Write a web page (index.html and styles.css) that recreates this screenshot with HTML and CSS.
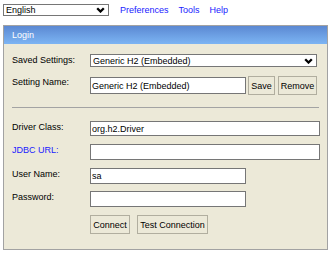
FILE: index.html
```html
<!DOCTYPE html>
<html lang="en">
<head>
    <meta charset="UTF-8">
    <title>H2 Console</title>
    <link rel="stylesheet" href="styles.css">
</head>
<body>
    <div class="toolbar">
        <span class="select-wrap lang-select">
            <select class="select">
                <option>English</option>
            </select>
            <svg class="chevron" width="9" height="6" viewBox="0 0 9 6"><path d="M1.2 1.2 L4.5 4.5 L7.8 1.2" fill="none" stroke="#000" stroke-width="2.3"/></svg>
        </span>
        <a href="#" class="nav-link">Preferences</a>
        <a href="#" class="nav-link">Tools</a>
        <a href="#" class="nav-link">Help</a>
    </div>

    <div class="panel">
        <div class="panel-header">Login</div>
        <div class="panel-body">
            <div class="row row-select">
                <label class="field-label">Saved Settings:</label>
                <span class="select-wrap saved-select">
                    <select class="select">
                        <option>Generic H2 (Embedded)</option>
                    </select>
                    <svg class="chevron" width="9" height="6" viewBox="0 0 9 6"><path d="M1.2 1.2 L4.5 4.5 L7.8 1.2" fill="none" stroke="#000" stroke-width="2.3"/></svg>
                </span>
            </div>
            <div class="row row-name">
                <label class="field-label">Setting Name:</label>
                <input type="text" class="input input-short input-name" value="Generic H2 (Embedded)">
                <button class="btn btn-save">Save</button>
                <button class="btn btn-remove">Remove</button>
            </div>

            <hr class="separator">

            <div class="row">
                <label class="field-label">Driver Class:</label>
                <input type="text" class="input input-wide" value="org.h2.Driver">
            </div>
            <div class="row">
                <label class="field-label link-label">JDBC URL:</label>
                <input type="text" class="input input-wide input-tall" value="">
            </div>
            <div class="row">
                <label class="field-label">User Name:</label>
                <input type="text" class="input input-short input-tall" value="sa">
            </div>
            <div class="row row-pass">
                <label class="field-label">Password:</label>
                <input type="password" class="input input-short input-tall" value="">
            </div>
            <div class="row row-buttons">
                <button class="btn btn-connect">Connect</button>
                <button class="btn btn-test">Test Connection</button>
            </div>
        </div>
    </div>
</body>
</html>
```

FILE: styles.css
```css
* {
    margin: 0;
    padding: 0;
    box-sizing: border-box;
}

body {
    font-family: 'Liberation Sans', Arial, sans-serif;
    font-size: 9px;
    color: #000;
    background: #fff;
    padding: 4px 3px 0 3px;
}

.toolbar {
    display: flex;
    align-items: center;
    height: 12px;
}

.select-wrap {
    position: relative;
    display: inline-block;
}

.select {
    -webkit-appearance: none;
    appearance: none;
    display: block;
    width: 100%;
    height: 100%;
    border: 1px solid #767676;
    border-radius: 0;
    background: #fff;
    font-family: 'Liberation Sans', Arial, sans-serif;
    font-size: 9px;
    color: #000;
    padding: 0 0 0 2px;
    line-height: 10px;
    outline: none;
}

.chevron {
    position: absolute;
    right: 4px;
    top: 50%;
    margin-top: -3px;
}

.lang-select {
    width: 106px;
    height: 12px;
}

.nav-link {
    color: #1a1aff;
    text-decoration: none;
    margin-left: 11px;
    line-height: 12px;
}

.nav-link + .nav-link {
    margin-left: 10px;
}

.panel {
    margin-top: 9px;
    width: 325px;
    border: 1px solid #a2a2a2;
    background: #ece9d8;
}

.panel-header {
    height: 18px;
    line-height: 18px;
    padding-left: 8px;
    color: #fff;
    background: linear-gradient(180deg, #5b88d2 0%, #6c9fe3 50%, #7cb4f3 100%);
}

.panel-body {
    display: flex;
    flex-direction: column;
    gap: 8px;
    padding: 10px 7px 15px 8px;
}

.row {
    display: flex;
    align-items: flex-start;
}

.field-label {
    width: 78px;
    flex-shrink: 0;
    line-height: 11px;
    padding-top: 1px;
}

.link-label {
    color: #1a1aff;
}

.saved-select {
    width: 227px;
    height: 13px;
}

.row-name {
    margin-top: 1px;
}

.input {
    height: 15px;
    border: 1px solid #767676;
    background: #fff;
    font-family: 'Liberation Sans', Arial, sans-serif;
    font-size: 9px;
    color: #000;
    padding: 0 1px;
    outline: none;
}

.input-tall {
    height: 16px;
}

.input-wide {
    width: 230px;
}

.input-short {
    width: 156px;
}

.input-name {
    height: 17px;
    margin-top: 1px;
}

.btn {
    height: 19px;
    border: 1px solid #b1ae9f;
    background: #ece9d8;
    font-family: 'Liberation Sans', Arial, sans-serif;
    font-size: 9px;
    color: #000;
    padding: 0;
}

.btn-save {
    width: 27px;
    margin-left: 2px;
}

.btn-remove {
    width: 39px;
    margin-left: 3px;
}

.separator {
    border: none;
    border-top: 1px solid #a3a3a3;
    width: 307px;
    margin: 4px 0 5px 0;
}

.row-pass {
    margin-top: -1px;
}

.row-buttons {
    padding-left: 78px;
    gap: 7px;
}

.btn-connect {
    width: 40px;
}

.btn-test {
    width: 71px;
}
```
